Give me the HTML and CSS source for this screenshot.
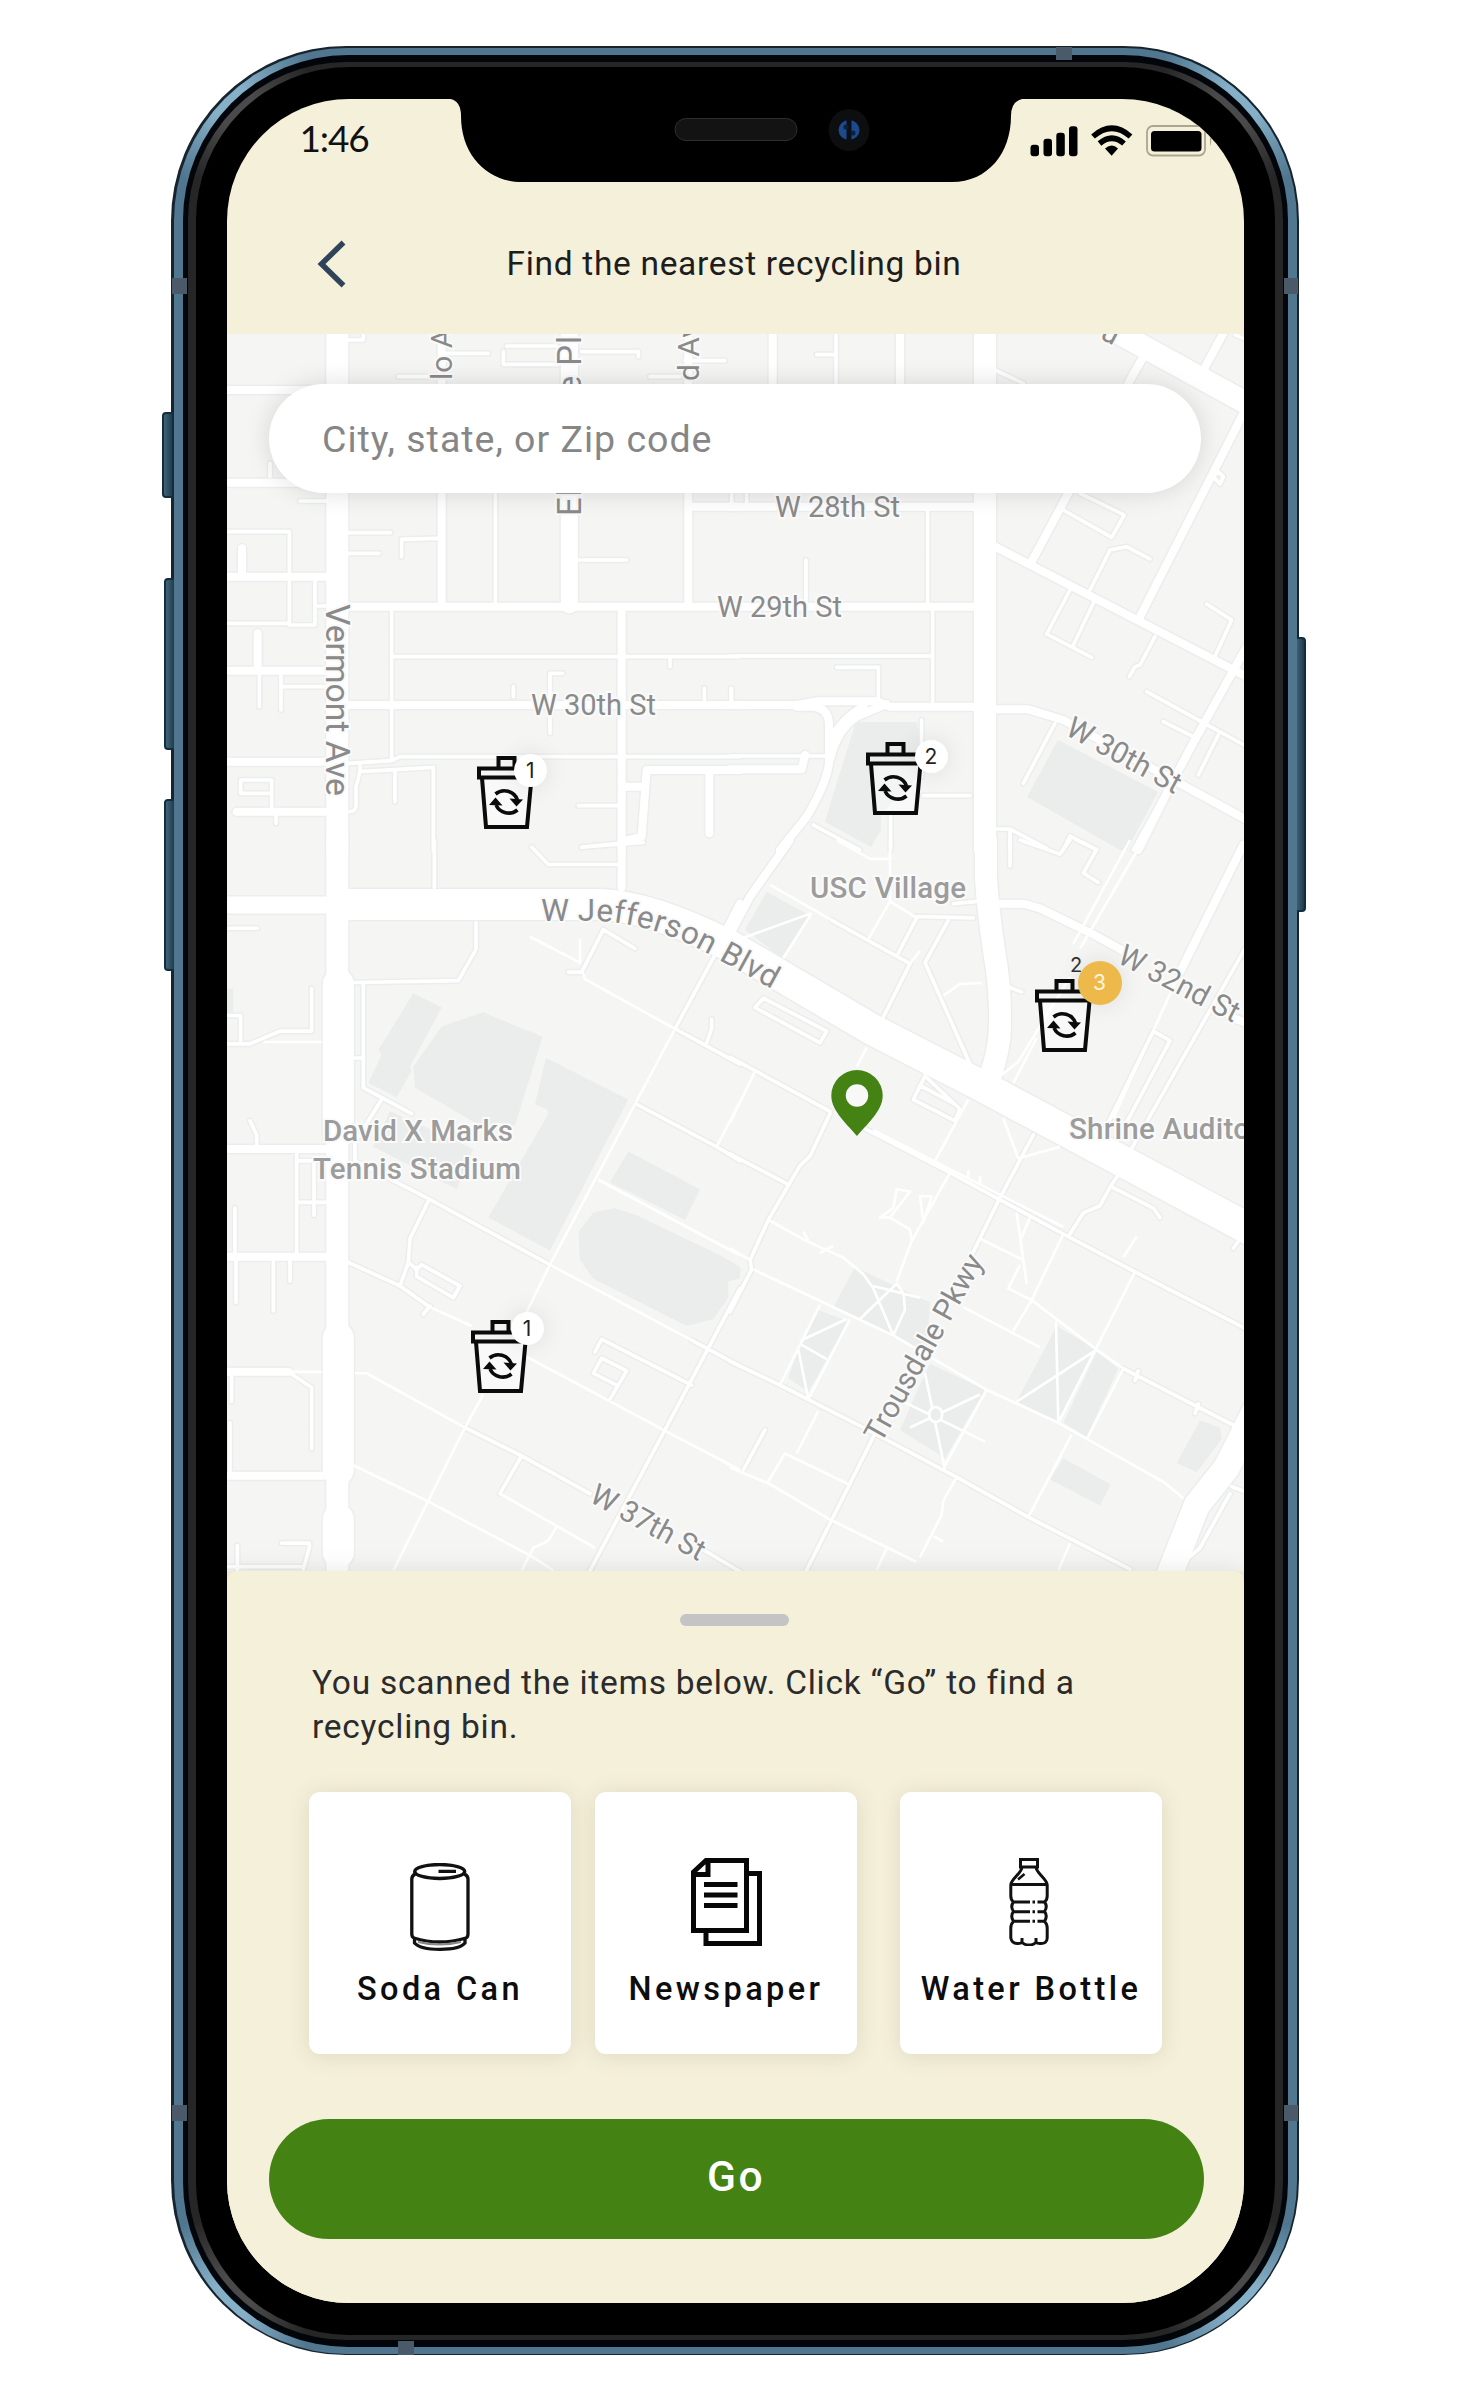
FILE: index.html
```html
<!DOCTYPE html>
<html lang="en">
<head>
<meta charset="utf-8">
<title>Find the nearest recycling bin</title>
<link rel="stylesheet" href="styles.css">
</head>
<body>
<svg class="sprite" width="0" height="0" aria-hidden="true">
  <symbol id="bin" viewBox="0 0 59 73">
    <path d="M6 22 10 71H49L53.500 22Z" fill="#fff" fill-opacity=".45"/>
    <g fill="none" stroke="#0b0b0b" stroke-width="4">
      <path d="M21.500 12V2H37.500V12M2 12.500H57V21.500H2ZM5 22 9 71H50L54.500 22"/>
      <path d="M18.500 38A14 14 0 0 1 40.500 44M40.500 54A14 14 0 0 1 19 49" stroke-width="3.600"/>
    </g>
    <path d="M32.500 42.500 46 43.500 39.500 50.500ZM12 49 25.500 49.500 18.500 41.500Z" fill="#0b0b0b"/>
  </symbol>
</svg>
<div class="phone">
  <i class="key key-mute"></i><i class="key key-up"></i><i class="key key-down"></i><i class="key key-power"></i>
  <div class="rail"><div class="seam"><div class="lip"><div class="glass">
    <main class="screen">
      <header class="top">
        <div class="status">
          <span class="clock">1:46</span>
          <svg class="signals" width="190" height="34" viewBox="0 0 190 34">
            <rect x="2.500" y="20.700" width="8.500" height="11.500" rx="3"/>
            <rect x="15.500" y="14.700" width="8.500" height="17.500" rx="3"/>
            <rect x="28.300" y="8.700" width="8.500" height="23.500" rx="3"/>
            <rect x="41" y="2.300" width="8.500" height="30" rx="3"/>
            <g fill="none" stroke="#000" stroke-width="5.600"><path d="M65 12.500Q84 -4 102.500 12.500M71.500 19.500Q84 9 96 19.500"/></g>
            <path d="M77 24.500Q84 18.500 90 24.500L83.700 31.800Z"/>
            <rect x="119" y="2" width="58" height="29.500" rx="6" fill="none" stroke="#aaa68f" stroke-width="1.800"/>
            <rect x="123" y="7" width="50.500" height="20.500" rx="3.500"/>
            <path d="M182 12V22Q184.500 17 182 12Z" fill="#aaa68f"/>
          </svg>
        </div>
        <div class="titlebar">
          <svg class="back" width="32" height="52" viewBox="0 0 32 52"><path d="M27.500 4.500 5.500 26 27.500 47.500" fill="none" stroke="#2f445a" stroke-width="5.500"/></svg>
          <h1>Find the nearest recycling bin</h1>
        </div>
      </header>

      <section class="map">
        <svg class="streets" width="1018" height="1237" viewBox="227 334 1018 1237">
          <defs>
            <g id="roads">
              <g transform="translate(220 330) scale(.33333)">
                <path class="w4" d="M20 605H208V880H20M208 880V885H285V740M285 828H320M240 513H320M385 608H512M385 670H477M655 625 545 628V680M1070 690H1220M515 840V1290M515 980H1560M385 1300 515 1292 540 1280H1560M990 1210V1030H1028M880 1070V1100M1350 985V1010M1453 1075V1110M1533 1075V1110M420 1300V1325L640 1312V1560M420 1325 408 1370V1430Q405 1445 390 1445M525 1325V1415M62 1350H155V1390H62ZM155 1390V1445M168 1445V1480M183 1140V1035M183 1070H320M118 1035V1130M1075 1427H1195M1085 1552 1195 1540M826 487V820M385 30H430V14M680 70H805M860 48H1010M850 65V103H1015M1085 65H1255V80M1395 92H1515M535 140H640M1290 140H1380M150 400V440M1535 487V520"/>
                <path class="w8" d="M385 830H1560M665 0V160M665 487V830M1405 0V830M1405 530H1560M1205 830V1560M385 1125H1560M20 180H320M20 458H320M20 740H320M20 1022H320M20 1295H320M50 1445H330M66 655V740M113 910V1022M1560 1320H1280L1265 1520 1205 1535M1215 1370H1265M1468 1330V1510"/>
                <path class="w17" d="M1048 0V160M1048 487V825"/>
                <path class="w22" d="M352 0V1560"/>
              </g>
              <g transform="translate(730 330) scale(.33333)">
                <path class="w4" d="M318 0V160M260 74H318M593 540V820M228 690V820M608 840V1115M0 978H608M320 1012H445V1105M575 1170V1340M580 1397H720M482 1450V1560M0 1278H300M250 1485 390 1560M1000 540 1145 622 1183 555 1050 490M1080 780 1140 660 1190 650 1260 687M1020 780 950 912 1085 982M1030 945 1090 820M1275 920 1230 1005 1215 1010 1198 1040M1430 822 1505 870 1450 990M1250 1085 1560 1255M1300 1175 1390 1220M1465 1215 1405 1335M975 1180 880 1360M800 1497H840L950 1555M840 1497V1560M1000 1560 1020 1518 1100 1560M795 120 880 160M1310 1380 1210 1560M1450 440 1465 425 1480 440 1470 462ZM1515 14 1560 35M50 487V520M5 1075V1110"/>
                <path class="w8" d="M0 530H735M0 830H735M0 1125H200L260 1114H440L480 1130H735M800 1138H895L1000 1170 1560 1475M200 1130H250Q295 1135 297 1180V1300Q290 1360 230 1460L150 1560M300 1290Q320 1200 380 1160L470 1122M305 1230Q330 1170 400 1130M128 0V160M510 0V160M0 1318H215L225 1275M795 650 1560 1045M905 695 1020 480M1195 160 1240 80M1225 870 1545 240M1480 10 1415 130M1550 950 1500 1040 1400 1220 1330 1350 1225 1560"/>
                <path class="w22" d="M1150 0 1560 225M765 0V1560"/>
              </g>
              <g transform="translate(220 840) scale(.33333 .4719)">
                <path class="w4" d="M20 187H112M20 432H90L130 420 180 405H275V315M20 372H62V425M405 302 715 298 768 232V175M430 305V525L575 580M485 550 405 640V680M405 462H430M643 0V100M935 15 985 52H1190M1085 15 1270 5M110 650V625L90 595M230 665V880M230 680H320M282 680V795M230 768H320M45 780V880M48 890V980M160 890V998M210 890V935M205 1127 275 1160V1290M35 1130V1190M30 1235V1345M52 1495V1548M185 1490H268V1500L250 1545M20 1540H250M385 895 540 945 630 990M405 680 625 760 990 900M625 765 570 845 565 895 540 945M565 895 590 910 605 900 720 945 700 970 590 925V905M610 1005 630 988M735 1245 905 1305 1110 1385M1440 1500 1560 1550M1365 400 1480 250 1560 130M1045 280H1085L1150 190 1245 230M1365 400 1560 475M1460 430 1475 400V380M1250 560 1490 650 1560 680M1110 1548 1335 1250 1560 950M1125 1085 1145 1058 1415 1155M1170 1185 1220 1125 1145 1098 1120 1130 1190 1155M905 1305 840 1385M1415 1060 1560 1115"/>
                <path class="w8" d="M20 655H320M20 883H320M20 1127H205M20 1347H310M1205 0V100M1520 190 1560 135"/>
                <path class="w17" d="M20 138H320"/>
                <path class="w22" d="M352 0V1568"/>
                <path class="w32" d="M355 305V620M355 1055V1335M355 1440V1510"/>
              </g>
              <g transform="translate(730 840) scale(.33333 .4719)">
                <path class="w4" d="M830 310 875 322M670 135 740 130M840 0V55M870 0 990 30 1020 0M1040 0 1100 20 1060 70 1105 90M305 170 540 262M560 162 730 165M560 165 505 240M655 170 585 260M540 262 460 375M585 260 720 475M75 355 100 335 290 405 270 430ZM550 550 585 500 690 570 675 595ZM570 520 675 560M0 460 300 575M400 610 660 705 1000 835 1215 915 1560 1040M0 665 175 730M300 580 240 670 210 690 115 805 60 890 65 910 0 1000M910 625 805 765 725 880M430 1265 215 1568M1020 835 1060 790 1110 775 1145 730 1165 710M1145 735 1270 780 1290 800M0 1105 150 1155 400 1245 680 1350 895 1435 1200 1545M40 1335 105 1250M1545 230 1200 660M1320 425 1270 405 1120 620M1320 425 1170 625M1180 1120 1510 1240M1215 1145 1225 1125M1395 1215 1405 1195M1505 1370 1560 1385M1500 1385 1410 1500 1370 1525M1510 865 1530 845"/>
                <path class="w8" d="M180 0 60 120 0 200M800 135H880L930 145 1090 200 1180 235M1500 375 1560 390M1540 10 1350 280"/>
                <path class="w22" d="M768 0V80Q775 160 800 270 815 350 808 420 800 470 765 530"/>
                <path class="w26" d="M1575 1210 1490 1330 1400 1410 1300 1590"/>
              </g>
              <path class="w32" d="M348 904.500H600Q650 906 730 946L873 1030 980 1085 1260 1235"/>
            </g>
            <path id="jefferson" d="M541 921H600Q655 924 712 956L790 999"/>
          </defs>

          <g class="blocks">
            <path d="M856 722H917L924 770 881 815V830L871 847 825 822 833 795ZM1058 740 1158 792 1127 850H1120L1027 797Z"/>
            <g transform="translate(220 840) scale(.33333 .4719)"><path d="M580 325 665 355 570 480 575 490 530 545 445 515 485 455 475 445ZM665 395 790 365 968 417 885 605H780L585 525 580 480ZM978 462 1225 550 990 870 805 800 985 580 980 570 945 560ZM1225 660 1440 740 1395 805 1170 725ZM1075 830 1120 790 1185 780 1250 795 1500 880 1560 905V930L1525 935V970L1480 1015 1400 1030 1120 930 1080 890ZM510 575 760 655 710 740 460 650ZM20 315H40V365H20Z"/></g>
            <g transform="translate(730 840) scale(.33333 .4719)"><path d="M110 110 240 160 155 250 45 190ZM375 905 570 970 600 980 590 1090 480 1050 310 990ZM260 995 355 1020 235 1170 175 1140 210 1070ZM600 1110 765 1165 645 1310 510 1250 560 1170ZM980 1030 1100 1080 985 1235 860 1190ZM1100 1085 1165 1120 1070 1265 1000 1235ZM1000 1310 1142 1365 1110 1410 960 1355ZM1410 1230 1470 1245 1475 1270 1400 1340 1340 1320ZM0 900 35 910 20 930H0Z"/></g>
          </g>

          <use href="#roads" class="casing"/>
          <use href="#roads" class="paving"/>

          <g class="paths">
            <path transform="translate(220 840) scale(.33333 .4719)" d="M130 428H305M930 205 1080 260V210M1085 275 1095 295 1365 400M630 990 755 1030M920 1095 1330 1250 1560 1335M205 1127H305M405 1130H440L735 1245M400 1325 620 1400 940 1520 1000 1548M990 900 1415 1060M520 1548 735 1245 790 1175M920 1000 990 900 1365 400M1490 650 1560 555M1135 720 1560 880M840 1385 1125 1500M905 1548 940 1500 985 1485 1010 1455"/>
            <path transform="translate(730 840) scale(.33333 .4719)" d="M120 95 305 170M415 210 480 130 560 165M480 0V130M540 262 570 235M640 330 690 305 755 303M320 0 420 40H480M245 155 160 250M10 215 245 155M1240 0 1050 230M1200 0 1030 220M1350 280 1150 590M1020 290 865 470 810 500M920 420 850 515M430 615 1000 820M410 440 380 480M715 550 615 680M660 705 545 850 500 935M75 490 0 600M115 805 230 850 340 885 400 920 430 950 490 1050M820 590 865 675 990 650M750 845 880 890M860 790 890 940M900 800 870 850M1000 835 905 975 850 1040M905 975 835 950 870 900M700 990 930 1075M905 975 1100 1080 1180 1120M1215 915 985 1235M1025 1260 895 1435M1180 885 1220 840M0 865 60 890M70 910 490 1050 770 1165 985 1235 1300 1360 1360 1395M270 985 150 1155M360 1015 235 1185 205 1080M215 1060 350 1015M215 1070 290 1100M265 1210 200 1300M0 1330 120 1365 300 1440 560 1530M110 1365 165 1300 355 1365M680 1350 640 1400 635 1430 570 1520M610 1475 640 1487M470 1500 440 1548M1020 1490 985 1548M390 1015 500 940 520 960 525 995 490 1050M430 945 570 970M585 1130 645 1335M770 1165 645 1325M520 1190 765 1275M750 1175 540 1245M978 1020 985 1235M860 1190 1100 1080 1180 1120 1070 1270M500 740 540 745 480 800H450L490 780ZM570 755H605L580 810ZM480 800 540 825 545 850M220 830 235 850M270 875 310 860M715 720V700M750 730V712"/>
            <ellipse cx="935.700" cy="1414.500" rx="6.500" ry="7.500"/>
          </g>

          <g class="street-names">
            <text x="775" y="517" textLength="125" lengthAdjust="spacingAndGlyphs">W 28th St</text>
            <text x="717" y="616.500" textLength="125" lengthAdjust="spacingAndGlyphs">W 29th St</text>
            <text x="531" y="715" textLength="125" lengthAdjust="spacingAndGlyphs">W 30th St</text>
            <text transform="translate(326 604) rotate(90)" textLength="192" lengthAdjust="spacingAndGlyphs" class="lg">Vermont Ave</text>
            <text transform="translate(452 380) rotate(-90)">lo A</text>
            <text transform="translate(581 516) rotate(-90)" textLength="180" class="lg">Ellendale Pl</text>
            <text transform="translate(699 381) rotate(-90)">d Av</text>
            <text transform="translate(1099 338) rotate(28)">u</text>
            <text transform="translate(1064 734) rotate(28.600)" textLength="126" lengthAdjust="spacingAndGlyphs">W 30th St</text>
            <text transform="translate(1116 962) rotate(27.500)" textLength="132" lengthAdjust="spacingAndGlyphs">W 32nd St</text>
            <text transform="translate(588 1501) rotate(28.600)" textLength="126" lengthAdjust="spacingAndGlyphs">W 37th St</text>
            <text transform="translate(881 1444) rotate(-60.600)" textLength="210" lengthAdjust="spacingAndGlyphs">Trousdale Pkwy</text>
            <text class="xl"><textPath href="#jefferson" textLength="246">W Jefferson Blvd</textPath></text>
          </g>
          <g class="place-names">
            <text x="323" y="1141" textLength="190">David X Marks</text>
            <text x="313" y="1178.500" textLength="208">Tennis Stadium</text>
            <text x="810" y="897.500" textLength="156">USC Village</text>
            <text x="1069" y="1138.500" textLength="181">Shrine Audito</text>
          </g>
        </svg>

        <div class="search">City, state, or Zip code</div>

        <div class="bin bin-a"><svg width="59" height="73"><use href="#bin"/></svg><b>1</b></div>
        <div class="bin bin-b"><svg width="59" height="73"><use href="#bin"/></svg><b>2</b></div>
        <div class="bin bin-c"><svg width="59" height="73"><use href="#bin"/></svg><b>1</b></div>
        <div class="bin bin-d"><i>2</i><svg width="59" height="73"><use href="#bin"/></svg><b class="hot">3</b></div>
        <svg class="pin" width="52" height="66" viewBox="0 0 52 66"><path fill="#448313" d="M26 0A25.700 25.700 0 0 1 51.700 25.700C51.700 41 35 55 26 66 17 55 .3 41 .3 25.700A25.700 25.700 0 0 1 26 0Z"/><circle cx="26" cy="25.500" r="11.200" fill="#f8f8f7"/></svg>
      </section>

      <section class="sheet">
        <div class="handle"></div>
        <p>You scanned the items below. Click “Go” to find a recycling bin.</p>
        <div class="cards">
          <div class="card">
            <svg width="60" height="88" viewBox="0 0 60 88" fill="none" stroke="#111" stroke-width="3.300"><ellipse cx="29.700" cy="8.500" rx="25" ry="7"/><path d="M28.500 8.300H46M5 8.500V11Q1.800 13 1.800 16V71Q1.800 74 4 75 29 83 56 75 58 74 58 71V16Q58 13 54.500 11V8.500M4.500 75V80Q10 86.300 30 86.300T55 80V75"/><path d="M8 79Q29 84 51 79" stroke="#888" stroke-width="2"/></svg>
            <span>Soda Can</span>
          </div>
          <div class="card">
            <svg width="71" height="88" viewBox="0 0 71 88" fill="none" stroke="#070707" stroke-width="5"><path d="M15 2.500H55.500V72.500H2.500V14ZM17 3V16.500H3M58 15.500H68.500V85.500H15V75M13 26.500H46.500M13 37H46.500M13 47.500H46.500"/></svg>
            <span>Newspaper</span>
          </div>
          <div class="card">
            <svg class="bottle" width="40" height="88" viewBox="0 0 40 88" fill="none" stroke="#111" stroke-width="3"><path d="M11.500 1.500H28.500V9H11.500ZM13 9C13 15 1.800 21 1.800 27V38Q1.800 42 4.500 44 1 48.500 4.500 53.500 1 58 4.500 63.500 1.800 66 1.800 70V80Q3 86 9 85.500 12 85.500 13 84 15 87 20 87T27 84Q28 85.500 31 85.500 38 86 38.200 80V70Q38.200 66 35.500 63.500 39 58 35.500 53.500 39 48.500 35.500 44 38.200 42 38.200 38V27C38.200 21 27 15 27 9M2 26.500H38M4 44H21M23.500 44H26M28.500 44H36M4 53.700H21M23.500 53.700H26M28.500 53.700H36M4 63.300H21M23.500 63.300H26M28.500 63.300H36M13 80V84.500M27 80V84.500"/><path d="M9 21.500 15.500 16" stroke-width="2.500"/></svg>
            <span>Water Bottle</span>
          </div>
        </div>
        <button class="go">Go</button>
      </section>

      <svg class="notch" width="590" height="86" viewBox="442 97 590 86">
        <path d="M442 97V98.500H446Q461 98.500 461 116C461 155 487 182 522 182H952C988 182 1011 153 1011 116Q1011 98.500 1027 98.500H1032V97Z"/>
        <rect x="675" y="118.500" width="122" height="22" rx="11" fill="#131313" stroke="#2c2f31"/>
        <ellipse cx="849" cy="130" rx="20.500" ry="21" fill="#0d0e10"/>
        <ellipse cx="849" cy="130" rx="10.500" ry="10" fill="#1d4a8c"/>
        <path d="M849 119V141" stroke="#0b0f18" stroke-width="5"/>
        <circle cx="846" cy="127" r="2.500" fill="#0c2038"/><circle cx="853" cy="133" r="2.500" fill="#0c2038"/>
      </svg>
    </main>
  </div></div></div></div>
  <i class="band band-t"></i><i class="band band-l1"></i><i class="band band-r1"></i><i class="band band-l2"></i><i class="band band-r2"></i><i class="band band-b"></i>
</div>
</body>
</html>
```
FILE: styles.css
```css
* { box-sizing: border-box; }
body {
  margin: 0;
  height: 2400px;
  background: #fff;
  font-family: Roboto, "Liberation Sans", sans-serif;
  color: #1d1d1d;
  overflow: hidden;
}
.sprite { position: absolute; }

/* Device body, nested from the outer edge to the glass */
.phone {
  position: relative;
  width: 1128px;
  height: 2309px;
  margin: 46px 0 0 171px;
  padding: 1.5px 2.5px;
  background: #17242e;
  border-radius: 175px;
}
.rail {
  position: relative;
  height: 100%;
  padding: 7px 9px;
  border-radius: 173px;
  background:
    radial-gradient(circle at 52px 50px, #86b0c8 20px, transparent 90px),
    radial-gradient(circle at 1071px 50px, #86b0c8 20px, transparent 90px),
    radial-gradient(circle at 52px 2256px, #86b0c8 20px, transparent 90px),
    radial-gradient(circle at 1071px 2256px, #86b0c8 20px, transparent 90px),
    #50778f;
}
.seam { height: 100%; padding: 7px 5px; border-radius: 165px; background: #02060a; }
.lip {
  height: 100%;
  padding: 5px 8px;
  border-radius: 159px;
  background:
    radial-gradient(circle at 48px 45px, #4a4a4a 20px, transparent 80px),
    radial-gradient(circle at 1047px 45px, #4a4a4a 20px, transparent 80px),
    radial-gradient(circle at 48px 2230px, #4a4a4a 20px, transparent 80px),
    radial-gradient(circle at 1047px 2230px, #4a4a4a 20px, transparent 80px),
    #262626;
}
.glass { height: 100%; padding: 32px 31px; border-radius: 153px; background: #000; }
.screen {
  position: relative;
  display: flex;
  flex-direction: column;
  height: 100%;
  border-radius: 122px;
  background: #f5f0da;
  overflow: hidden;
}
.key {
  position: absolute;
  width: 12px;
  border: 2px solid #152c3b;
  border-radius: 4px 0 0 4px;
  background: linear-gradient(90deg, #42647a, #1f3c4e);
}
.key-mute { left: -9px; top: 366px; height: 86px; }
.key-up { left: -7px; top: 532px; height: 172px; }
.key-down { left: -7px; top: 753px; height: 172px; }
.key-power { right: -7px; top: 591px; height: 275px; border-radius: 0 4px 4px 0; }
.band { position: absolute; background: #4a5a68; }
.band-t { left: 885px; top: 1px; width: 16px; height: 13px; }
.band-b { left: 227px; bottom: 0; width: 16px; height: 14px; }
.band-l1, .band-l2 { left: 1px; width: 15px; height: 16px; }
.band-r1, .band-r2 { right: 1px; width: 14px; height: 16px; }
.band-l1, .band-r1 { top: 232px; }
.band-l2, .band-r2 { top: 2059px; }

/* Header */
.top { flex: 0 0 235.5px; }
.status {
  display: flex;
  justify-content: space-between;
  height: 100px;
  padding: 0 26px 0 73px;
}
.clock { margin-top: 16px; font: 37px/46px Lato, "Noto Sans", sans-serif; color: #111; letter-spacing: -1.1px; }
.signals { margin-top: 25px; }
.titlebar { display: flex; align-items: center; height: 131px; }
.back { margin: 0 0 1px 89px; }
h1 { margin: 0 0 2px 159px; font-size: 33.5px; font-weight: 400; letter-spacing: .68px; white-space: nowrap; }
.notch { position: absolute; left: 215px; top: -1.5px; }

/* Map */
.map { position: relative; flex: 0 0 1237px; background: #f5f5f4; overflow: hidden; }
.streets { display: block; }
.streets path { vector-effect: non-scaling-stroke; }
#roads { fill: none; stroke-linecap: round; stroke-linejoin: round; }
.w4 { stroke-width: calc(3.6px + var(--edge)); }
.w8 { stroke-width: calc(8px + var(--edge)); }
.w17 { stroke-width: calc(17px + var(--edge)); }
.w22 { stroke-width: calc(22px + var(--edge)); }
.w26 { stroke-width: calc(26px + var(--edge)); }
.w32 { stroke-width: calc(31px + var(--edge)); }
.casing { stroke: #ebeeed; --edge: 3px; }
.paving { stroke: #fff; --edge: 0px; }
.blocks { fill: #eaedec; }
.paths { fill: none; stroke: #fff; stroke-width: 2.6px; stroke-linejoin: round; }
.paths ellipse { fill: #eaedec; }
.street-names, .place-names {
  font-size: 30px;
  fill: #8a8a8a;
  stroke: #fafafa;
  stroke-width: 4px;
  paint-order: stroke;
}
.street-names .lg { font-size: 33px; }
.street-names .xl { font-size: 31.5px; }
.place-names { font-weight: 500; font-size: 29.5px; fill: #9c9c9c; }
.search {
  position: absolute;
  left: 42px;
  top: 49.5px;
  width: 932px;
  height: 109px;
  padding-left: 53.5px;
  border-radius: 55px;
  background: #fff;
  box-shadow: 0 0 26px rgba(0, 0, 0, .13);
  font-size: 37.5px;
  line-height: 110px;
  letter-spacing: 1px;
  color: #868686;
}
.bin { position: absolute; width: 59px; height: 73px; }
.bin svg { display: block; }
.bin-a { left: 250.200px; top: 422px; }
.bin-b { left: 639px; top: 408.300px; }
.bin-c { left: 244px; top: 985.500px; }
.bin-d { left: 808px; top: 644.700px; }
.bin b {
  position: absolute;
  left: 37px;
  top: -2px;
  width: 33px;
  height: 33px;
  border-radius: 50%;
  background: #fff;
  box-shadow: 0 0 24px rgba(0, 0, 0, .1);
  font: 400 21px/33px Inter, Roboto, sans-serif;
  text-align: center;
  color: #222;
}
.bin-b b { left: 49px; }
.bin-c b { left: 40px; top: -8px; }
.bin b.hot { left: 43px; top: -18px; width: 44px; height: 44px; background: #eeb94b; color: #fdf6dc; line-height: 44px; }
.bin i { position: absolute; left: 35.5px; top: -26px; font: 400 20px/24px Inter, Roboto, sans-serif; color: #333; }
.pin { position: absolute; left: 604.500px; top: 735.5px; }

/* Bottom sheet */
.sheet {
  position: relative;
  flex: 1;
  display: flex;
  flex-direction: column;
  padding: 43px 42px 0;
  border-radius: 10px 10px 0 0;
  background: #f5f0da;
  box-shadow: 0 0 24px rgba(0, 0, 0, .1);
}
.handle { align-self: center; width: 109px; height: 12px; margin-right: 2px; border-radius: 6px; background: #c4c4c4; }
.sheet p { width: 820px; height: 88px; margin: 35px 0 0 43.500px; font-size: 33.500px; line-height: 43.700px; letter-spacing: .75px; color: #2b2b2b; }
.cards { display: flex; margin: 42.500px 0 0 40.500px; }
.card {
  display: flex;
  flex-direction: column;
  align-items: center;
  justify-content: flex-end;
  width: 262px;
  height: 262px;
  padding-bottom: 45px;
  border-radius: 11px;
  background: #fff;
  box-shadow: 0 2px 22px rgba(80, 70, 20, .13);
}
.card + .card { margin-left: 24px; }
.card + .card + .card { margin-left: 43px; }
.card svg { margin-bottom: 23px; }
.card:first-child svg { margin-bottom: 18px; }
.card .bottle { margin-right: 5px; }
.card span { font-size: 32.500px; font-weight: 500; line-height: 40px; letter-spacing: 3.400px; white-space: nowrap; color: #0d0d0d; }
.go {
  width: 935px;
  height: 120px;
  margin-top: 65px;
  padding: 0 0 3px;
  border: 0;
  border-radius: 60px;
  background: #448313;
  color: #fff;
  font: 500 42.500px/1 Roboto, sans-serif;
  letter-spacing: 2.500px;
}
```
